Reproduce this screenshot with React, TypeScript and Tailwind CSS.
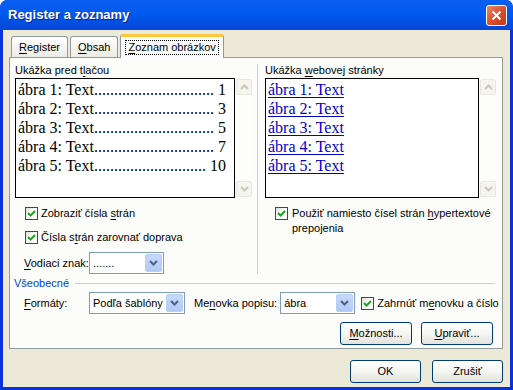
import React from 'react';

const U = ({ children }: { children: React.ReactNode }) => <span className="underline underline-offset-[2px]">{children}</span>;

const Checkbox = () => (
  <span className="w-[13px] h-[13px] border border-[#1c5180] bg-gradient-to-br from-[#dcdcd7] via-white to-white flex items-center justify-center shrink-0">
    <svg width="9" height="9" viewBox="0 0 9 9">
      <path d="M1 4 L3.5 6.5 L8 2" stroke="#21a121" strokeWidth="2" fill="none" />
    </svg>
  </span>
);

const Chevron = ({ up, color }: { up?: boolean; color: string }) => (
  <svg width="9" height="6" viewBox="0 0 9 6">
    <path d={up ? 'M1 5 L4.5 1.5 L8 5' : 'M1 1 L4.5 4.5 L8 1'} stroke={color} strokeWidth="2" fill="none" />
  </svg>
);

const ScrollBar = () => (
  <div className="w-[16px] h-[120px] bg-[#fdfdfa] flex flex-col justify-between py-[1px]">
    <div className="h-[16px] border border-[#e9e8df] rounded-[2px] bg-[#f5f4ee] flex items-center justify-center">
      <Chevron up color="#c9c7ba" />
    </div>
    <div className="h-[16px] border border-[#e9e8df] rounded-[2px] bg-[#f5f4ee] flex items-center justify-center">
      <Chevron color="#c9c7ba" />
    </div>
  </div>
);

const Combo = ({ value, w }: { value: string; w: string }) => (
  <div className={`${w} h-[22px] border border-[#7f9db9] bg-white flex items-center`}>
    <span className="flex-1 pl-[3px] leading-[14px]">{value}</span>
    <div className="w-[17px] h-[18px] mr-[1px] rounded-[2px] bg-gradient-to-b from-[#c6d8fc] to-[#b3c9f5] border border-[#b9cdf6] flex items-center justify-center">
      <Chevron color="#4d6185" />
    </div>
  </div>
);

const Button = ({ children, w }: { children: React.ReactNode; w: string }) => (
  <div className={`${w} h-[23px] border border-[#003c74] rounded-[3px] bg-gradient-to-b from-white via-[#f5f5f2] to-[#e3e2da] flex items-center justify-center`}>
    {children}
  </div>
);

const Tab = ({ children }: { children: React.ReactNode }) => (
  <div className="h-[21px] px-[7px] border border-b-0 border-[#919b9c] rounded-t-[3px] bg-gradient-to-b from-white to-[#ecebe5] flex items-center mr-[2px]">
    {children}
  </div>
);

export default function App() {
  const entries = [
    ['ábra 1: Text', '1'],
    ['ábra 2: Text', '3'],
    ['ábra 3: Text', '5'],
    ['ábra 4: Text', '7'],
    ['ábra 5: Text', '10'],
  ];

  return (
    <div className="w-[513px] h-[390px] bg-[#0831d9] rounded-t-[7px] flex flex-col font-['Liberation_Sans',sans-serif] text-[11px] text-black overflow-hidden">
      {/* title bar */}
      <div className="h-[30px] shrink-0 rounded-t-[7px] bg-gradient-to-b from-[#0a5ff0] via-[#0058ee] to-[#0546d6] flex items-center pl-[8px] pr-[6px]">
        <span className="flex-1 text-white font-bold text-[13px] [text-shadow:1px_1px_#0a1f8a]">Register a zoznamy</span>
        <div className="w-[21px] h-[21px] rounded-[3px] border border-white bg-gradient-to-br from-[#e88a6c] via-[#d9502a] to-[#c5391a] flex items-center justify-center">
          <svg width="11" height="11" viewBox="0 0 11 11">
            <path d="M1.5 1.5 L9.5 9.5 M9.5 1.5 L1.5 9.5" stroke="white" strokeWidth="2" />
          </svg>
        </div>
      </div>

      {/* body */}
      <div className="flex-1 mx-[3px] mb-[3px] bg-[#ece9d8] flex flex-col pl-[6px] pr-[7px]">
        {/* tabs */}
        <div className="h-[27px] flex items-end pl-[2px]">
          <Tab><U>R</U>egister</Tab>
          <Tab><U>O</U>bsah</Tab>
          <div className="h-[24px] -mb-[1px] relative z-10 px-[4px] border border-b-0 border-[#919b9c] rounded-t-[3px] bg-[#fcfcfe] flex items-center border-t-[3px] border-t-[#ffc83c]">
            <span className="border border-dotted border-black px-[2px] leading-[13px]"><U>Z</U>oznam obrázkov</span>
          </div>
        </div>

        {/* panel */}
        <div className="h-[292px] border border-[#919b9c] bg-[#fcfcfb] flex flex-col">
          <div className="flex h-[218px]">
            {/* left column */}
            <div className="w-[247px] pl-[5px] pt-[6px] flex flex-col">
              <div className="leading-[13px]">Ukážka pred t<U>l</U>ačou</div>
              <div className="flex gap-[1px] mt-[1px]">
                <div className="w-[220px] h-[120px] border border-black bg-white pl-[2px] pr-[8px] pt-[1px] font-['Liberation_Serif',serif] text-[16px] leading-[19px]">
                  {entries.map(([t, n]) => (
                    <div key={t} className="flex whitespace-nowrap">
                      <span>{t}{'.'.repeat(n.length > 1 ? 28 : 30)}</span>
                      <span className="ml-auto">{n}</span>
                    </div>
                  ))}
                </div>
                <ScrollBar />
              </div>
              <div className="flex items-center gap-[3px] pl-[10px] mt-[9px] h-[13px]">
                <Checkbox /><span>Zobraziť čísla <U>s</U>trán</span>
              </div>
              <div className="flex items-center gap-[3px] pl-[10px] mt-[11px] h-[13px]">
                <Checkbox /><span>Čísla s<U>t</U>rán zarovnať doprava</span>
              </div>
              <div className="flex items-center pl-[9px] mt-[8px]">
                <span className="w-[65px]"><U>V</U>odiaci znak:</span>
                <Combo value="......." w="w-[75px]" />
              </div>
            </div>

            {/* right column */}
            <div className="flex-1 mt-[6px] mb-[2px] border-l border-[#d0d0bf] pl-[7px] flex flex-col">
              <div className="leading-[13px]">Ukážka <U>w</U>ebovej stránky</div>
              <div className="flex gap-[1px] mt-[1px]">
                <div className="w-[214px] h-[120px] border border-black bg-white pl-[2px] pt-[1px] font-['Liberation_Serif',serif] text-[16px] leading-[19px] text-[#0000cc]">
                  {entries.map(([t]) => (
                    <div key={t}><span className="underline underline-offset-[2px]">{t}</span></div>
                  ))}
                </div>
                <ScrollBar />
              </div>
              <div className="flex items-start gap-[4px] pl-[10px] mt-[9px]">
                <Checkbox />
                <span className="leading-[15px] -mt-[1px]">Použiť namiesto čísel strán <U>h</U>ypertextové<br />prepojenia</span>
              </div>
            </div>
          </div>

          {/* general */}
          <div className="flex items-center pl-[4px] pr-[7px] h-[14px]">
            <span className="text-[#0046d5]">Všeobecné</span>
            <div className="flex-1 ml-[6px] border-t border-[#d0d0bf]" />
          </div>
          <div className="flex items-center pl-[14px] mt-[2px]">
            <span className="w-[65px]"><U>F</U>ormáty:</span>
            <Combo value="Podľa šablóny" w="w-[96px]" />
            <span className="ml-[9px] mr-[3px]">Me<U>n</U>ovka popisu:</span>
            <Combo value="ábra" w="w-[75px]" />
            <div className="flex items-center gap-[3px] ml-[6px]">
              <Checkbox /><span>Zahrnúť m<U>e</U>novku a číslo</span>
            </div>
          </div>
          <div className="flex justify-end gap-[9px] pr-[9px] mt-[8px]">
            <Button w="w-[72px]"><span><U>M</U>ožnosti...</span></Button>
            <Button w="w-[72px]"><span><U>U</U>praviť...</span></Button>
          </div>
        </div>

        {/* dialog buttons */}
        <div className="flex justify-end gap-[11px] mt-[11px]">
          <Button w="w-[71px]">OK</Button>
          <Button w="w-[71px]">Zrušiť</Button>
        </div>
      </div>
    </div>
  );
}
